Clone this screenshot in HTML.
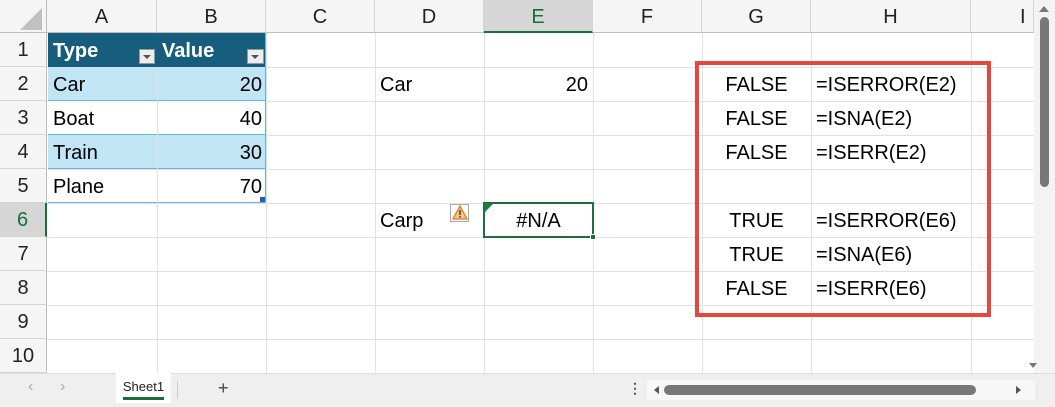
<!DOCTYPE html>
<html><head><style>
body{margin:0;width:1055px;height:407px;overflow:hidden;background:#fff;font-family:"Liberation Sans",Arial,sans-serif;position:relative}
div{position:absolute;box-sizing:border-box}
.vl{width:1px;background:#e1e1e1;top:33px;height:340px}
.hl{height:1px;background:#e1e1e1;left:0;width:1034px}
.ch{top:0;height:33px;background:#f5f5f5;border-right:1px solid #d4d4d4;border-bottom:1px solid #bdbdbd;text-align:center;line-height:34px;font-size:20px;color:#222}
.rh{left:0;width:47px;height:34px;background:#f5f5f5;border-bottom:1px solid #d4d4d4;border-right:1px solid #bdbdbd;text-align:center;line-height:35px;font-size:20px;color:#222}
.t{font-size:20px;line-height:36px;height:34px;color:#000;white-space:nowrap}
</style></head><body>
<div style="left:0;top:0;width:47px;height:33px;background:#f5f5f5;border-right:1px solid #bdbdbd;border-bottom:1px solid #bdbdbd"></div>
<div style="left:20px;top:8px;width:0;height:0;border-left:22px solid transparent;border-bottom:22px solid #c0c0c0"></div>
<div class="ch" style="left:47px;width:110px">A</div>
<div class="ch" style="left:157px;width:109px">B</div>
<div class="ch" style="left:266px;width:109px">C</div>
<div class="ch" style="left:375px;width:109px">D</div>
<div class="ch" style="left:484px;width:109px;background:#d6d6d6;color:#17703a;border-bottom:2px solid #17703a">E</div>
<div class="ch" style="left:593px;width:109px">F</div>
<div class="ch" style="left:702px;width:109px">G</div>
<div class="ch" style="left:811px;width:160px">H</div>
<div class="ch" style="left:971px;width:63px;text-align:left;padding-left:49px">I</div>
<div class="rh" style="top:33px">1</div>
<div class="rh" style="top:67px">2</div>
<div class="rh" style="top:101px">3</div>
<div class="rh" style="top:135px">4</div>
<div class="rh" style="top:169px">5</div>
<div class="rh" style="top:203px;background:#d6d6d6;color:#17703a;border-right:2px solid #17703a">6</div>
<div class="rh" style="top:237px">7</div>
<div class="rh" style="top:271px">8</div>
<div class="rh" style="top:305px">9</div>
<div class="rh" style="top:339px">10</div>
<div class="vl" style="left:157px"></div><div class="vl" style="left:266px"></div><div class="vl" style="left:375px"></div><div class="vl" style="left:484px"></div><div class="vl" style="left:593px"></div><div class="vl" style="left:702px"></div><div class="vl" style="left:811px"></div><div class="vl" style="left:971px"></div>
<div class="hl" style="top:67px;left:47px;width:987px"></div><div class="hl" style="top:101px;left:47px;width:987px"></div><div class="hl" style="top:135px;left:47px;width:987px"></div><div class="hl" style="top:169px;left:47px;width:987px"></div><div class="hl" style="top:203px;left:47px;width:987px"></div><div class="hl" style="top:237px;left:47px;width:987px"></div><div class="hl" style="top:271px;left:47px;width:987px"></div><div class="hl" style="top:305px;left:47px;width:987px"></div><div class="hl" style="top:339px;left:47px;width:987px"></div>
<div style="left:48px;top:33px;width:218px;height:34px;background:#175d7e"></div>
<div class="t" style="left:53px;top:33px;color:#fff;font-weight:bold">Type</div>
<div class="t" style="left:162px;top:33px;color:#fff;font-weight:bold">Value</div>
<div style="left:139px;top:49px;width:16px;height:15px;background:#eee;border:1px solid #999"></div>
<div style="left:143px;top:55px;border-left:4px solid transparent;border-right:4px solid transparent;border-top:4px solid #555;width:0;height:0"></div>
<div style="left:247px;top:49px;width:17px;height:15px;background:#eee;border:1px solid #999"></div>
<div style="left:251px;top:55px;border-left:4px solid transparent;border-right:4px solid transparent;border-top:4px solid #555;width:0;height:0"></div>
<div style="left:48px;top:67px;width:218px;height:34px;background:#c1e5f5;border-bottom:1px solid #61b8de"></div>
<div style="left:48px;top:101px;width:218px;height:34px;background:#fff;border-bottom:1px solid #61b8de"></div>
<div style="left:48px;top:135px;width:218px;height:34px;background:#c1e5f5;border-bottom:1px solid #61b8de"></div>
<div style="left:48px;top:169px;width:218px;height:34px;border-bottom:1px solid #61b8de"></div>
<div style="left:157px;top:67px;width:1px;height:136px;background:#e1e1e1"></div>
<div style="left:265px;top:33px;width:1px;height:170px;background:#61b8de"></div>
<div style="left:260px;top:197px;width:5px;height:5px;background:#3355bb"></div>
<div class="t" style="left:53px;top:67px">Car</div><div class="t" style="left:53px;top:101px">Boat</div><div class="t" style="left:53px;top:135px">Train</div><div class="t" style="left:53px;top:169px">Plane</div>
<div class="t" style="right:793px;top:67px">20</div><div class="t" style="right:793px;top:101px">40</div><div class="t" style="right:793px;top:135px">30</div><div class="t" style="right:793px;top:169px">70</div>
<div class="t" style="left:380px;top:67px">Car</div>
<div class="t" style="right:467px;top:67px">20</div>
<div class="t" style="left:380px;top:203px">Carp</div>
<div style="left:450px;top:204px;width:19px;height:18px;border:1px solid #aaa;background:#fff"></div>
<svg style="position:absolute;left:452px;top:205px" width="16" height="16"><path d="M8 1L15 14H1Z" fill="#f6c28b" stroke="#e07b20" stroke-width="1.3"/><rect x="7.3" y="5" width="1.4" height="5" fill="#333"/><rect x="7.3" y="11" width="1.4" height="1.5" fill="#333"/></svg>
<div style="left:483px;top:202px;width:111px;height:36px;border:2px solid #1e6e3e"></div>
<div style="left:485px;top:204px;width:0;height:0;border-top:8px solid #1e7e3e;border-right:8px solid transparent"></div>
<div style="left:590px;top:234px;width:6px;height:6px;background:#1e6e3e;border:1px solid #fff"></div>
<div class="t" style="left:484px;top:203px;width:109px;text-align:center">#N/A</div>
<div class="t" style="left:702px;top:67px;width:109px;text-align:center">FALSE</div>
<div class="t" style="left:702px;top:101px;width:109px;text-align:center">FALSE</div>
<div class="t" style="left:702px;top:135px;width:109px;text-align:center">FALSE</div>
<div class="t" style="left:702px;top:203px;width:109px;text-align:center">TRUE</div>
<div class="t" style="left:702px;top:237px;width:109px;text-align:center">TRUE</div>
<div class="t" style="left:702px;top:271px;width:109px;text-align:center">FALSE</div>
<div class="t" style="left:816px;top:67px">=ISERROR(E2)</div>
<div class="t" style="left:816px;top:101px">=ISNA(E2)</div>
<div class="t" style="left:816px;top:135px">=ISERR(E2)</div>
<div class="t" style="left:816px;top:203px">=ISERROR(E6)</div>
<div class="t" style="left:816px;top:237px">=ISNA(E6)</div>
<div class="t" style="left:816px;top:271px">=ISERR(E6)</div>
<div style="left:695px;top:61px;width:296px;height:256px;border:4px solid #e8453c"></div>
<div style="left:1034px;top:0;width:21px;height:373px;background:#f3f3f3"></div>
<div style="left:1039px;top:6px;width:0;height:0;border-left:5px solid transparent;border-right:5px solid transparent;border-bottom:6px solid #777"></div>
<div style="left:1040px;top:17px;width:9px;height:170px;background:#777;border-radius:5px"></div>
<div style="left:1029px;top:363px;width:0;height:0;border-left:4px solid transparent;border-right:4px solid transparent;border-top:5px solid #777"></div>
<div style="left:0;top:373px;width:1055px;height:34px;background:#efefef;border-top:1px solid #ddd"></div>
<div style="left:28px;top:378px;font-size:16px;color:#aaa">&#x2039;</div>
<div style="left:60px;top:378px;font-size:16px;color:#aaa">&#x203A;</div>
<div style="left:116px;top:373px;width:55px;height:30px;background:#fff;font-size:13px;text-align:center;line-height:28px;color:#222">Sheet1</div>
<div style="left:123px;top:397px;width:41px;height:3px;background:#17703a"></div>
<div style="left:177px;top:381px;width:1px;height:18px;background:#ccc"></div>
<div style="left:218px;top:378px;font-size:18px;color:#444">+</div>
<div style="left:628px;top:380px;font-size:14px;color:#555;font-weight:bold">&#8942;</div>
<div style="left:647px;top:380px;width:388px;height:20px;background:#f7f7f7"></div>
<div style="left:654px;top:386px;width:0;height:0;border-top:4px solid transparent;border-bottom:4px solid transparent;border-right:5px solid #555"></div>
<div style="left:664px;top:385px;width:312px;height:10px;background:#777;border-radius:5px"></div>
<div style="left:1016px;top:386px;width:0;height:0;border-top:4px solid transparent;border-bottom:4px solid transparent;border-left:5px solid #555"></div>
</body></html>
